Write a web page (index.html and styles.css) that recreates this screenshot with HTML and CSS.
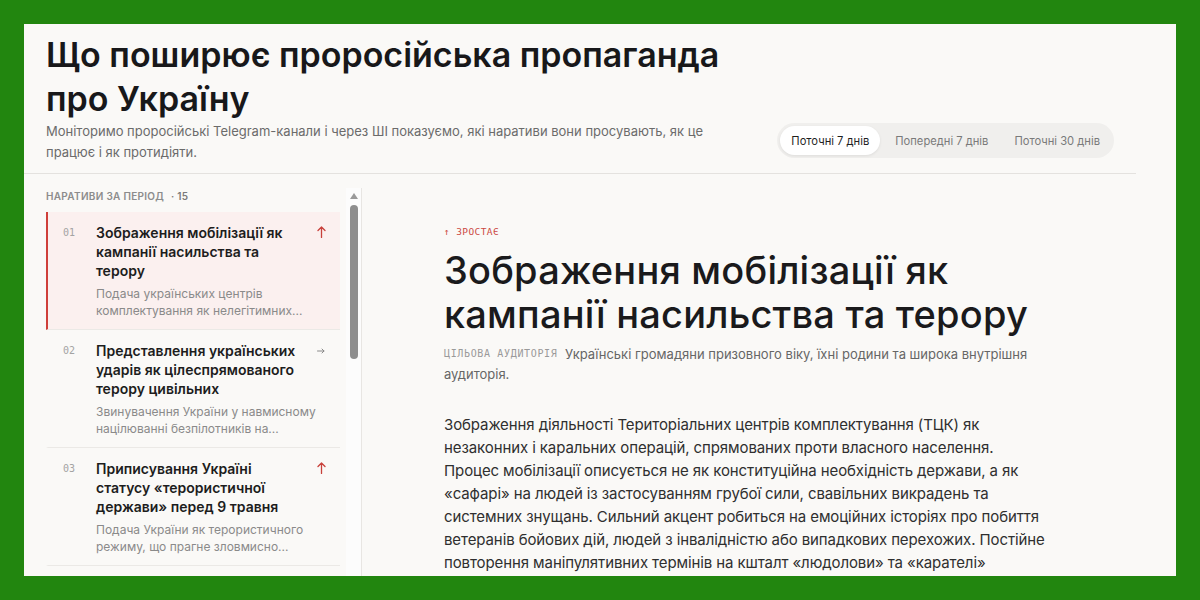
FILE: index.html
```html
<!DOCTYPE html>
<html lang="uk">
<head>
<meta charset="utf-8">
<title>Що поширює проросійська пропаганда про Україну</title>
<link rel="stylesheet" href="styles.css">
</head>
<body>
<div class="frame">
  <div class="page">
    <header class="header">
      <div class="intro">
        <h1 class="title">Що поширює проросійська пропаганда про Україну</h1>
        <p class="lead">Моніторимо проросійські Telegram-канали і через ШІ показуємо, які наративи вони просувають, як це працює і як протидіяти.</p>
      </div>
      <nav class="tabs">
        <span class="tab active">Поточні 7 днів</span>
        <span class="tab">Попередні 7 днів</span>
        <span class="tab">Поточні 30 днів</span>
      </nav>
    </header>
    <div class="body">
      <aside class="sidebar">
        <div class="list">
          <div class="list-head">Наративи за період <span class="count">· 15</span></div>
          <div class="item active">
            <span class="num">01</span>
            <div class="item-text">
              <div class="item-row">
                <div class="item-title">Зображення мобілізації як кампанії насильства та терору</div>
                <span class="trend">
                  <svg class="ico-up" width="9" height="12" viewBox="0 0 9 12"><path d="M4.5 11.5V1M1 4.5L4.5 1L8 4.5" fill="none" stroke="#c8413b" stroke-width="1.3" stroke-linecap="round" stroke-linejoin="round"/></svg>
                </span>
              </div>
              <div class="item-desc">Подача українських центрів комплектування як нелегітимних...</div>
            </div>
          </div>
          <div class="item">
            <span class="num">02</span>
            <div class="item-text">
              <div class="item-row">
                <div class="item-title">Представлення українських ударів як цілеспрямованого терору цивільних</div>
                <span class="trend">
                  <svg class="ico-right" width="8" height="6" viewBox="0 0 8 6"><path d="M0.5 3H7M5 1L7 3L5 5" fill="none" stroke="#8a8a8a" stroke-width="1" stroke-linecap="round" stroke-linejoin="round"/></svg>
                </span>
              </div>
              <div class="item-desc">Звинувачення України у навмисному націлюванні безпілотників на...</div>
            </div>
          </div>
          <div class="item">
            <span class="num">03</span>
            <div class="item-text">
              <div class="item-row">
                <div class="item-title">Приписування Україні статусу «терористичної держави» перед 9 травня</div>
                <span class="trend">
                  <svg class="ico-up" width="9" height="12" viewBox="0 0 9 12"><path d="M4.5 11.5V1M1 4.5L4.5 1L8 4.5" fill="none" stroke="#c8413b" stroke-width="1.3" stroke-linecap="round" stroke-linejoin="round"/></svg>
                </span>
              </div>
              <div class="item-desc">Подача України як терористичного режиму, що прагне зловмисно...</div>
            </div>
          </div>
        </div>
        <div class="scrollbar">
          <span class="sb-arrow"></span>
          <span class="sb-thumb"></span>
        </div>
      </aside>
      <main class="main">
        <article class="article">
          <div class="status">↑ Зростає</div>
          <h2 class="headline">Зображення мобілізації як кампанії насильства та терору</h2>
          <p class="audience"><span class="aud-label">Цільова аудиторія</span> Українські громадяни призовного віку, їхні родини та широка внутрішня аудиторія.</p>
          <p class="text">Зображення діяльності Територіальних центрів комплектування (ТЦК) як незаконних і каральних операцій, спрямованих проти власного населення. Процес мобілізації описується не як конституційна необхідність держави, а як «сафарі» на людей із застосуванням грубої сили, свавільних викрадень та системних знущань. Сильний акцент робиться на емоційних історіях про побиття ветеранів бойових дій, людей з інвалідністю або випадкових перехожих. Постійне повторення маніпулятивних термінів на кшталт «людолови» та «карателі»</p>
        </article>
      </main>
    </div>
  </div>
</div>
</body>
</html>
```

FILE: styles.css
```css
* { box-sizing: border-box; }

body {
  margin: 0;
  background: #22860f;
}

.frame {
  width: 1200px;
  height: 600px;
  padding: 24px;
}

.page {
  width: 1152px;
  height: 552px;
  background: #faf9f7;
  overflow: hidden;
  font-family: Inter, "Noto Sans", "Liberation Sans", sans-serif;
  color: #1c1c1c;
  display: flex;
  flex-direction: column;
}

/* Header */
.header {
  flex: none;
  margin-right: 40px;
  padding: 9px 22px 10px;
  border-bottom: 1px solid #e4e2df;
  display: flex;
  justify-content: space-between;
  align-items: flex-end;
}

.intro {
  width: 700px;
}

.title {
  margin: 0;
  font-size: 34px;
  line-height: 44px;
  font-weight: 600;
  letter-spacing: 0;
  color: #18181a;
}

.lead {
  margin: 0;
  font-size: 13px;
  line-height: 21px;
  color: #6b6b6b;
}

.tabs {
  display: flex;
  gap: 4px;
  padding: 3px;
  margin-bottom: 5px;
  background: #f0efed;
  border-radius: 999px;
}

.tab {
  padding: 0 11px;
  height: 29px;
  display: flex;
  align-items: center;
  font-size: 11.2px;
  color: #7a7a7a;
  border-radius: 999px;
  white-space: nowrap;
}

.tab.active {
  background: #ffffff;
  color: #1f1f1f;
  box-shadow: 0 1px 3px rgba(0, 0, 0, 0.08);
}

/* Body */
.body {
  flex: 1;
  min-height: 0;
  display: flex;
}

.sidebar {
  flex: none;
  width: 338px;
  margin-top: 14px;
  border-right: 1px solid #e8e6e3;
  display: flex;
  overflow: hidden;
}

.list {
  flex: 1;
  padding: 0 6px 0 22px;
  overflow: hidden;
}

.list-head {
  height: 16px;
  line-height: 16px;
  margin-bottom: 8px;
  font-size: 10px;
  font-weight: 600;
  letter-spacing: 0.3px;
  text-transform: uppercase;
  color: #8c8c8c;
}

.count {
  margin-left: 4px;
  color: #7a7a7a;
}

.item {
  display: flex;
  align-items: flex-start;
  padding: 11px 14px 10px 15px;
  border-left: 2px solid transparent;
  border-bottom: 1px solid #ebe9e6;
}

.item.active {
  background: #fbf0ef;
  border-left-color: #cf3f3a;
}

.num {
  flex: none;
  width: 33px;
  padding-top: 2px;
  font-family: "DejaVu Sans Mono", "Liberation Mono", monospace;
  font-size: 10px;
  line-height: 16px;
  color: #a3a3a3;
}

.item-text {
  flex: 1;
  min-width: 0;
}

.item-row {
  display: flex;
  align-items: flex-start;
}

.item-title {
  flex: 1;
  min-width: 0;
  font-size: 14px;
  line-height: 19px;
  font-weight: 600;
  color: #1d1d1d;
}

.item-desc {
  margin-top: 5px;
  font-size: 12px;
  line-height: 17px;
  color: #8a8a8a;
}

.trend {
  flex: none;
  width: 10px;
  margin-left: 12px;
  display: flex;
  justify-content: center;
}

.ico-up { margin-top: 3px; }
.ico-right { margin-top: 7px; }

.scrollbar {
  flex: none;
  width: 15px;
  background: #fcfcfc;
  display: flex;
  flex-direction: column;
  align-items: center;
}

.sb-arrow {
  margin-top: 5px;
  width: 0;
  height: 0;
  border-left: 4px solid transparent;
  border-right: 4px solid transparent;
  border-bottom: 6px solid #9a9a9a;
}

.sb-thumb {
  margin-top: 6px;
  width: 8px;
  height: 154px;
  border-radius: 4px;
  background: #8e8e8e;
}

/* Main */
.main {
  flex: 1;
  min-width: 0;
  padding: 51px 0 0 82px;
  overflow: hidden;
}

.article {
  max-width: 605px;
}

.status {
  height: 14px;
  line-height: 14px;
  font-family: "DejaVu Sans Mono", "Liberation Mono", monospace;
  font-size: 9.5px;
  letter-spacing: 0.4px;
  text-transform: uppercase;
  color: #cc4a44;
}

.headline {
  margin: 9px 0 0;
  font-size: 38px;
  line-height: 44px;
  font-weight: 500;
  letter-spacing: 0.2px;
  color: #1a1a1c;
}

.audience {
  margin: 8px 0 0;
  font-size: 13px;
  line-height: 20px;
  color: #666666;
}

.aud-label {
  display: inline-block;
  margin-right: 4px;
  font-family: "DejaVu Sans Mono", "Liberation Mono", monospace;
  font-size: 10px;
  line-height: 20px;
  vertical-align: top;
  letter-spacing: 0.65px;
  text-transform: uppercase;
  color: #9a9a9a;
}

.text {
  margin: 29px 0 0;
  font-size: 15px;
  line-height: 23px;
  letter-spacing: -0.1px;
  color: #2f2f2f;
}
```
